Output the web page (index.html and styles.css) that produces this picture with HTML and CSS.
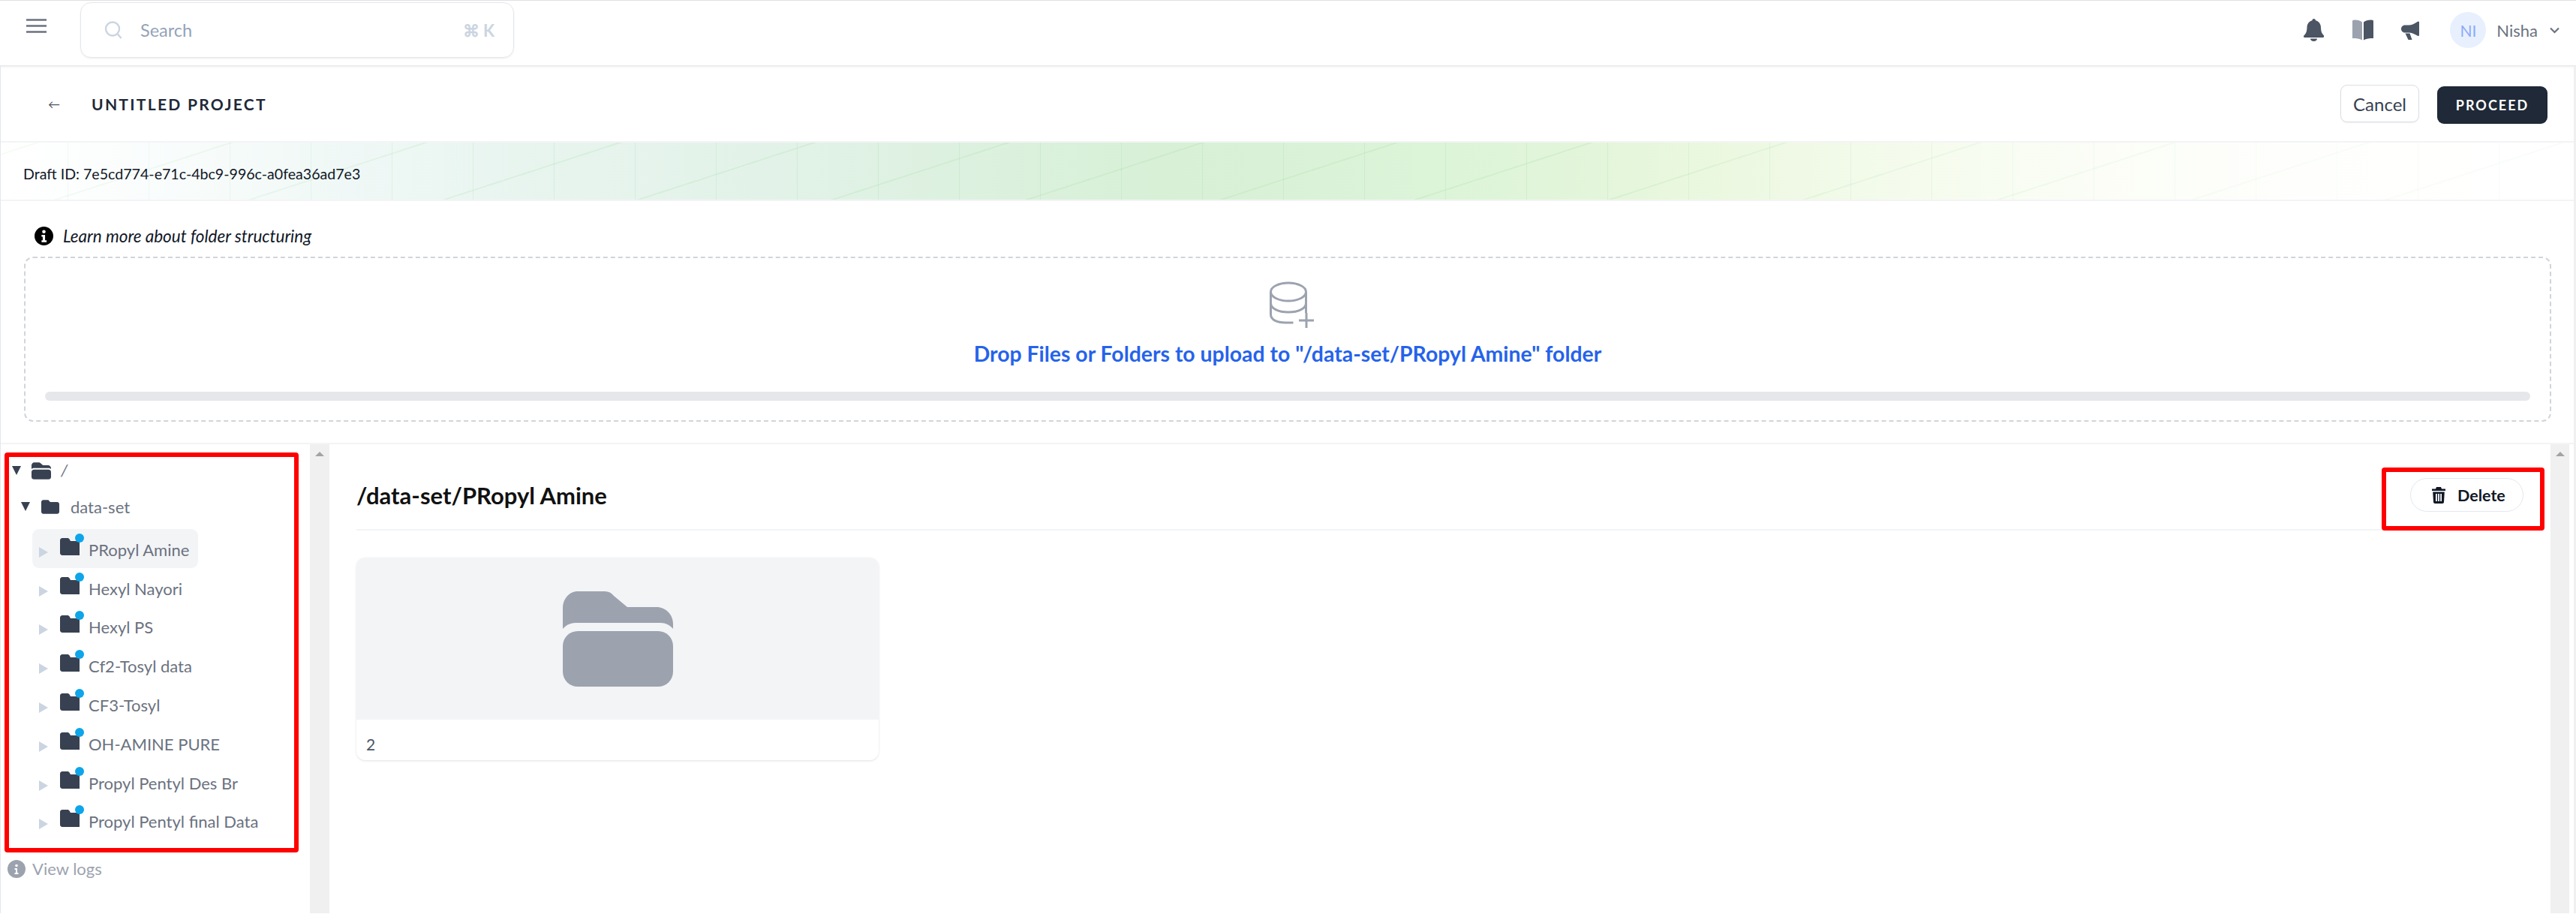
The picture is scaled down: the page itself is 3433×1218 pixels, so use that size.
FILE: index.html
```html
<!DOCTYPE html>
<html lang="en">
<head>
    <meta charset="UTF-8">
    <title>Untitled Project</title>
    <link rel="stylesheet" href="styles.css">
</head>
<body>

    <!-- Top bar -->
    <header class="topbar">
        <div class="topbar-left">
            <svg class="menu-icon" viewBox="0 0 27 19"><path d="M0 1.500h27M0 9.500h27M0 17.500h27" fill="none" stroke="#6b7280" stroke-width="2.600"/></svg>
            <div class="search">
                <svg class="search-icon" viewBox="0 0 24 24"><circle cx="11" cy="10.500" r="9" fill="none" stroke="#cbd5e1" stroke-width="2.400"/><path d="M17.500 17l5 6" stroke="#cbd5e1" stroke-width="2.400"/></svg>
                <span class="search-text">Search</span>
                <span class="search-key">⌘ K</span>
            </div>
        </div>
        <div class="topbar-right">
            <svg class="bell" viewBox="0 0 27 30"><path d="M13.500 0c1.500 0 2.400 1 2.500 2.200 4.300 1 7 4.800 7 9.300 0 3.500.6 7 2.800 9.500.9 1 1.700 1.600 1.700 2.500 0 1-.8 1.500-1.700 1.500H1.700C.8 25 0 24.500 0 23.500 0 22.600.8 22 1.700 21 3.900 18.500 4.500 15 4.500 11.500c0-4.500 2.700-8.300 7-9.300C11.600 1 12 0 13.500 0z" fill="#4b5563"/><path d="M9 26.500h9c0 2-2 3.500-4.500 3.500S9 28.500 9 26.500z" fill="#4b5563"/></svg>
            <svg class="book" viewBox="0 0 28 28"><path d="M13 3.500v24C10 25.500 5 25 0 25V1.500C1 .8 2 .5 3 .5c4 0 8 1 10 3z" fill="#9ca3af"/><path d="M15 3.500v24c3-2 8-2.500 13-2.500V1.500C27 .8 26 .5 25 .5c-4 0-8 1-10 3z" fill="#4b5563"/></svg>
            <svg class="horn" viewBox="0 0 24 25"><path d="M24 1v18.500l-1.500.5C18 17.500 14 15.500 10 15.500H5C2 15.500 0 13 0 10.500S2 5.500 5 5.500h5C14 5.500 18 3.500 22.500.5z" fill="#4b5563"/><path d="M5.500 16.500h6l3 8.500H9.500z" fill="#4b5563"/></svg>
            <div class="avatar">NI</div>
            <span class="user-name">Nisha</span>
            <svg class="chevron" viewBox="0 0 13 9"><path d="M1 1.500l5.500 5.500L12 1.500" fill="none" stroke="#6b7280" stroke-width="2.200"/></svg>
        </div>
    </header>

    <div class="page">

        <!-- Project title -->
        <section class="project-bar">
            <div class="project-title">
                <span class="back-arrow">←</span>
                <h1>UNTITLED PROJECT</h1>
            </div>
            <div class="project-actions">
                <button class="btn-cancel">Cancel</button>
                <button class="btn-proceed">PROCEED</button>
            </div>
        </section>

        <div class="draft-banner">Draft ID: 7e5cd774-e71c-4bc9-996c-a0fea36ad7e3</div>

        <!-- Upload -->
        <section class="upload">
            <div class="learn-more">
                <svg class="info-icon" viewBox="0 0 24 24"><circle cx="12" cy="12" r="12" fill="#000"/><circle cx="12" cy="6.500" r="2.200" fill="#fff"/><path d="M9 10.500h4.500v7H15.500v2.500H9v-2.500h1.500v-4.500H9z" fill="#fff"/></svg>
                <em>Learn more about folder structuring</em>
            </div>
            <div class="dropzone">
                <svg class="db-icon" viewBox="0 0 60 63" fill="none" stroke="#9ca3af" stroke-width="3">
                    <ellipse cx="25" cy="14" rx="23.500" ry="12"/>
                    <path d="M1.500 14v30c0 7 8 11 20 11h10"/>
                    <path d="M48.500 14v28"/>
                    <path d="M1.500 29c0 7 10 12 23.500 12s23.500-5 23.500-12"/>
                    <path d="M49 42v20M39 52h20"/>
                </svg>
                <p class="drop-text">Drop Files or Folders to upload to "/data-set/PRopyl Amine" folder</p>
                <div class="drop-bar"></div>
            </div>
        </section>

        <!-- Browser -->
        <section class="workspace">
            <aside class="sidebar">
                <div class="tree">
                    <div class="tree-root">
                        <span class="caret-open"></span>
                        <svg class="folder-open" viewBox="0 0 147 127"><path d="M0 50V22C0 10 9 0 20 0H56C61 0 65 2 68 6L86 21H125C137 21 147 31 147 43V50C143 45 137 42 130 42H17C10 42 4 45 0 50Z"/><rect y="53" width="147" height="74" rx="20"/></svg>
                        <span class="root-name">/</span>
                    </div>
                    <div class="tree-parent">
                        <span class="caret-open"></span>
                        <svg class="folder-parent" viewBox="0 0 26 20"><path d="M3 0h6c1 0 2 .5 2.600 1.500L13 3h10c1.600 0 3 1.400 3 3v11c0 1.600-1.400 3-3 3H3c-1.600 0-3-1.400-3-3V3c0-1.600 1.400-3 3-3z"/></svg>
                        <span>data-set</span>
                    </div>
                    <ul class="tree-list">
                        <li class="tree-item selected"><span class="caret-closed"></span><span class="folder-wrap"><svg viewBox="0 0 26 23"><path d="M3 0h7c1 0 2 .6 2.600 1.500L14 4h12v19H3c-1.600 0-3-1.400-3-3V3c0-1.600 1.400-3 3-3z"/></svg><i class="dot"></i></span><span class="item-name">PRopyl Amine</span></li>
                        <li class="tree-item"><span class="caret-closed"></span><span class="folder-wrap"><svg viewBox="0 0 26 23"><path d="M3 0h7c1 0 2 .6 2.600 1.500L14 4h12v19H3c-1.600 0-3-1.400-3-3V3c0-1.600 1.400-3 3-3z"/></svg><i class="dot"></i></span><span class="item-name">Hexyl Nayori</span></li>
                        <li class="tree-item"><span class="caret-closed"></span><span class="folder-wrap"><svg viewBox="0 0 26 23"><path d="M3 0h7c1 0 2 .6 2.600 1.500L14 4h12v19H3c-1.600 0-3-1.400-3-3V3c0-1.600 1.400-3 3-3z"/></svg><i class="dot"></i></span><span class="item-name">Hexyl PS</span></li>
                        <li class="tree-item"><span class="caret-closed"></span><span class="folder-wrap"><svg viewBox="0 0 26 23"><path d="M3 0h7c1 0 2 .6 2.600 1.500L14 4h12v19H3c-1.600 0-3-1.400-3-3V3c0-1.600 1.400-3 3-3z"/></svg><i class="dot"></i></span><span class="item-name">Cf2-Tosyl data</span></li>
                        <li class="tree-item"><span class="caret-closed"></span><span class="folder-wrap"><svg viewBox="0 0 26 23"><path d="M3 0h7c1 0 2 .6 2.600 1.500L14 4h12v19H3c-1.600 0-3-1.400-3-3V3c0-1.600 1.400-3 3-3z"/></svg><i class="dot"></i></span><span class="item-name">CF3-Tosyl</span></li>
                        <li class="tree-item"><span class="caret-closed"></span><span class="folder-wrap"><svg viewBox="0 0 26 23"><path d="M3 0h7c1 0 2 .6 2.600 1.500L14 4h12v19H3c-1.600 0-3-1.400-3-3V3c0-1.600 1.400-3 3-3z"/></svg><i class="dot"></i></span><span class="item-name">OH-AMINE PURE</span></li>
                        <li class="tree-item"><span class="caret-closed"></span><span class="folder-wrap"><svg viewBox="0 0 26 23"><path d="M3 0h7c1 0 2 .6 2.600 1.500L14 4h12v19H3c-1.600 0-3-1.400-3-3V3c0-1.600 1.400-3 3-3z"/></svg><i class="dot"></i></span><span class="item-name">Propyl Pentyl Des Br</span></li>
                        <li class="tree-item"><span class="caret-closed"></span><span class="folder-wrap"><svg viewBox="0 0 26 23"><path d="M3 0h7c1 0 2 .6 2.600 1.500L14 4h12v19H3c-1.600 0-3-1.400-3-3V3c0-1.600 1.400-3 3-3z"/></svg><i class="dot"></i></span><span class="item-name">Propyl Pentyl final Data</span></li>
                    </ul>
                </div>
                <div class="view-logs">
                    <svg class="logs-icon" viewBox="0 0 24 24"><circle cx="12" cy="12" r="12" fill="#9ca3af"/><circle cx="12" cy="7.500" r="1.800" fill="#fff"/><path d="M9.500 11h3.500v6h1.500v2h-5v-2H11v-4H9.500z" fill="#fff"/></svg>
                    <span>View logs</span>
                </div>
            </aside>
            <div class="scrollbar"><span class="scroll-up"></span></div>

            <main class="content">
                <div class="content-head">
                    <h2>/data-set/PRopyl Amine</h2>
                    <button class="btn-delete">
                        <svg class="trash" viewBox="0 0 18 22"><path d="M6 0h6l1 2.500h5v2.500H0V2.500h5z" fill="#111827"/><path fill-rule="evenodd" d="M1.200 6.500h15.600L16 20c0 1.200-1 2-2 2H4c-1 0-2-.8-2-2zM5 9v10h1.800V9zm3.100 0v10h1.800V9zM11.200 9v10H13V9z" fill="#111827"/></svg>
                        Delete
                    </button>
                    <div class="delete-mark"></div>
                </div>
                <div class="folder-card">
                    <div class="folder-thumb">
                        <svg class="folder-big" viewBox="0 0 147 127"><path d="M0 50V22C0 10 9 0 20 0H56C61 0 65 2 68 6L86 21H125C137 21 147 31 147 43V50C143 45 137 42 130 42H17C10 42 4 45 0 50Z"/><rect y="53" width="147" height="74" rx="20"/></svg>
                    </div>
                    <div class="folder-label">2</div>
                </div>
            </main>
            <div class="scrollbar scrollbar-main"><span class="scroll-up"></span></div>
        </section>
    </div>

</body>
</html>
```

FILE: styles.css
```css
* {
    box-sizing: border-box;
}
body {
    margin: 0;
    width: 3433px;
    height: 1218px;
    overflow: hidden;
    background-color: white;
    font-family: "Lato", "Open Sans", sans-serif;
    color: #111827;
}
button {
    font-family: inherit;
    cursor: pointer;
}

/* top bar */
.topbar {
    height: 88px;
    display: flex;
    justify-content: space-between;
    border-top: 1px solid #e0e0e0;
    border-bottom: 1px solid #e5e7eb;
    box-shadow: 0 1px 3px rgba(0, 0, 0, 0.08);
}
.topbar-left {
    display: flex;
    align-items: flex-start;
    padding-left: 35px;
}
.menu-icon {
    width: 27px;
    height: 19px;
    margin-top: 24px;
}
.search {
    width: 578px;
    height: 74px;
    margin-left: 45px;
    margin-top: 2px;
    padding: 0 25px 0 31px;
    display: flex;
    align-items: center;
    border: 1px solid #e5e7eb;
    border-radius: 14px;
    box-shadow: 0 1px 2px rgba(0, 0, 0, 0.08);
}
.search-icon {
    width: 24px;
    height: 24px;
}
.search-text {
    margin-left: 24px;
    font-size: 23.500px;
    color: #94a3b8;
}
.search-key {
    margin-left: auto;
    font-size: 22px;
    font-weight: 700;
    color: #cbd5e1;
}
.topbar-right {
    display: flex;
    align-items: center;
    padding-right: 22px;
    padding-bottom: 8px;
}
.bell {
    width: 27px;
    height: 30px;
}
.book {
    width: 28px;
    height: 28px;
    margin-left: 38px;
}
.horn {
    width: 24px;
    height: 25px;
    margin-left: 37px;
}
.avatar {
    width: 48px;
    height: 48px;
    margin-left: 41px;
    border-radius: 50%;
    background-color: #e8f0fe;
    color: #8caafb;
    font-size: 21px;
    display: flex;
    align-items: center;
    justify-content: center;
}
.user-name {
    margin-left: 14px;
    font-size: 22px;
    color: #6b7280;
}
.chevron {
    width: 13px;
    height: 9px;
    margin-left: 16px;
}

.page {
    height: 1129px;
    display: flex;
    flex-direction: column;
    border-left: 1px solid #e5e7eb;
    border-right: 3px solid #f0f0f0;
}

/* project bar */
.project-bar {
    height: 102px;
    flex-shrink: 0;
    display: flex;
    justify-content: space-between;
    align-items: center;
    padding: 0 35px 0 63px;
    border-bottom: 2px solid #f3f4f6;
}
.project-title {
    display: flex;
    align-items: center;
}
.back-arrow {
    width: 58px;
    font-size: 16px;
    color: #4b5563;
}
.project-title h1 {
    margin: 0;
    font-size: 21px;
    font-weight: 700;
    letter-spacing: 2.300px;
    color: #1f2937;
}
.project-actions {
    display: flex;
    align-items: center;
    gap: 24px;
}
.btn-cancel {
    width: 105px;
    height: 50px;
    background: white;
    border: 1px solid #d9dee5;
    border-radius: 9px;
    box-shadow: 0 1px 2px rgba(0, 0, 0, 0.06);
    font-size: 24px;
    color: #374151;
}
.btn-proceed {
    width: 147px;
    height: 50px;
    margin-top: 4px;
    background-color: #1f2937;
    border: none;
    border-radius: 9px;
    color: white;
    font-size: 18px;
    font-weight: 700;
    letter-spacing: 2px;
}

/* banner with faint grid */
.draft-banner {
    height: 78px;
    flex-shrink: 0;
    display: flex;
    align-items: center;
    padding-left: 30px;
    padding-top: 6px;
    font-size: 19.600px;
    border-bottom: 2px solid #f3f4f6;
    background-color: white;
    background-image:
        linear-gradient(90deg, rgba(255, 255, 255, 0.55) 0, rgba(255, 255, 255, 0) 20%, rgba(255, 255, 255, 0) 62%, rgba(255, 255, 255, 0.7) 90%),
        linear-gradient(90deg, rgba(150, 215, 170, 0.22) 1px, transparent 1px),
        repeating-linear-gradient(162deg, transparent 0, transparent 14px, rgba(150, 215, 150, 0.18) 14px, rgba(150, 215, 150, 0.18) 16px, transparent 16px, transparent 80px),
        linear-gradient(90deg, #fff 0, #edf7f5 12%, #e2f2e8 30%, #d7f0d6 45%, #dcf4d8 56%, #e9f7dc 67%, #f5fbea 79%, #fdfef8 90%, #fff 98%);
    background-size: 100% 100%, 108px 100%, 100% 100%, 100% 100%;
    background-position: 0 0, 89px 0, 0 0, 0 0;
}

/* upload area */
.upload {
    height: 324px;
    flex-shrink: 0;
    padding: 34px 30px 0 31px;
    border-bottom: 2px solid #f3f4f6;
}
.learn-more {
    display: flex;
    align-items: center;
    gap: 13px;
    margin-left: 14px;
    height: 25px;
    font-size: 22.500px;
}
.info-icon {
    width: 25px;
    height: 25px;
}
.dropzone {
    height: 220px;
    margin-top: 15px;
    padding: 31px 26px 0;
    border: 2px dashed #d1d5db;
    border-radius: 12px;
    display: flex;
    flex-direction: column;
    align-items: center;
}
.db-icon {
    width: 60px;
    height: 63px;
    margin-left: 12px;
}
.drop-text {
    margin: 16px 0 0;
    font-size: 28.400px;
    font-weight: 700;
    color: #2563eb;
}
.drop-bar {
    width: 100%;
    height: 12px;
    margin-top: 34px;
    border-radius: 6px;
    background-color: #e5e7eb;
}

/* tree + content */
.workspace {
    flex: 1;
    display: flex;
    min-height: 0;
}
.sidebar {
    width: 412px;
    flex-shrink: 0;
    padding: 11px 15px 0 5px;
}
.tree {
    height: 533px;
    border: 6px solid #ff0000;
    border-radius: 4px;
    font-size: 22px;
    color: #6b7280;
}
.tree-root {
    height: 36px;
    display: flex;
    align-items: center;
    padding-left: 4px;
}
.caret-open {
    width: 0;
    height: 0;
    border-left: 6px solid transparent;
    border-right: 6px solid transparent;
    border-top: 12px solid #374151;
}
.folder-open {
    width: 26px;
    height: 23px;
    margin-left: 14px;
    fill: #374151;
}
.root-name {
    margin-left: 13px;
    margin-top: -3px;
    font-style: italic;
}
.tree-parent {
    height: 48px;
    margin-top: 6px;
    display: flex;
    align-items: center;
    padding-left: 16px;
}
.folder-parent {
    width: 24px;
    height: 19px;
    margin-left: 15px;
    margin-right: 15px;
    fill: #374151;
}
.tree-list {
    list-style: none;
    margin: 6px 0 0;
    padding: 0 0 0 31px;
}
.tree-item {
    width: 221px;
    height: 51.800px;
    display: flex;
    align-items: center;
    padding-left: 9px;
    border-radius: 9px;
    white-space: nowrap;
}
.tree-item.selected {
    background-color: #f3f4f6;
}
.caret-closed {
    width: 0;
    height: 0;
    margin-top: 10px;
    border-top: 7px solid transparent;
    border-bottom: 7px solid transparent;
    border-left: 12px solid #cbd5e1;
}
.folder-wrap {
    position: relative;
    display: block;
    width: 26px;
    height: 23px;
    margin: -5px 12px 0 16px;
}
.folder-wrap svg {
    display: block;
    width: 26px;
    height: 23px;
    fill: #374151;
}
.dot {
    position: absolute;
    top: -6px;
    right: -6px;
    width: 12px;
    height: 12px;
    border-radius: 50%;
    background-color: #0ea5e9;
}
.item-name {
    margin-top: 3px;
}
.view-logs {
    display: flex;
    align-items: center;
    gap: 9px;
    margin-top: 8px;
    margin-left: 4px;
    font-size: 22px;
    color: #9ca3af;
}
.logs-icon {
    width: 24px;
    height: 24px;
}
.scrollbar {
    width: 26px;
    flex-shrink: 0;
    padding-top: 10px;
    background-color: #f0f0f0;
    display: flex;
    justify-content: center;
    align-items: flex-start;
}
.scrollbar-main {
    width: 25px;
    margin-right: 6px;
}
.scroll-up {
    width: 0;
    height: 0;
    border-left: 6px solid transparent;
    border-right: 6px solid transparent;
    border-bottom: 6px solid #a3a3a3;
}
.content {
    flex: 1;
    padding: 0 36px;
    min-width: 0;
}
.content-head {
    position: relative;
    height: 115px;
    display: flex;
    justify-content: space-between;
    align-items: center;
    padding-top: 22px;
    border-bottom: 2px solid #f3f4f6;
}
.content-head h2 {
    margin: 0;
    font-size: 31px;
    font-weight: 700;
    color: #111;
}
.btn-delete {
    width: 151px;
    height: 45px;
    display: flex;
    align-items: center;
    padding-left: 28px;
    gap: 16px;
    background: white;
    border: 1px solid #e2e8f0;
    border-radius: 23px;
    font-size: 21.500px;
    font-weight: 700;
    color: #111827;
}
.trash {
    width: 18px;
    height: 22px;
}
/* red mark drawn over the delete button */
.delete-mark {
    position: absolute;
    right: -28px;
    bottom: -2px;
    width: 217px;
    height: 84px;
    border: 6px solid #ff0000;
    border-radius: 4px;
}
.folder-card {
    width: 696px;
    height: 270px;
    margin-top: 36px;
    border-radius: 12px;
    overflow: hidden;
    box-shadow: 0 1px 3px rgba(0, 0, 0, 0.12);
}
.folder-thumb {
    height: 216px;
    display: flex;
    align-items: center;
    justify-content: center;
    background-color: #f3f4f6;
}
.folder-big {
    width: 147px;
    height: 127px;
    fill: #9ca3af;
}
.folder-label {
    padding: 20px 13px 0;
    font-size: 21px;
    color: #4b5563;
}
```
